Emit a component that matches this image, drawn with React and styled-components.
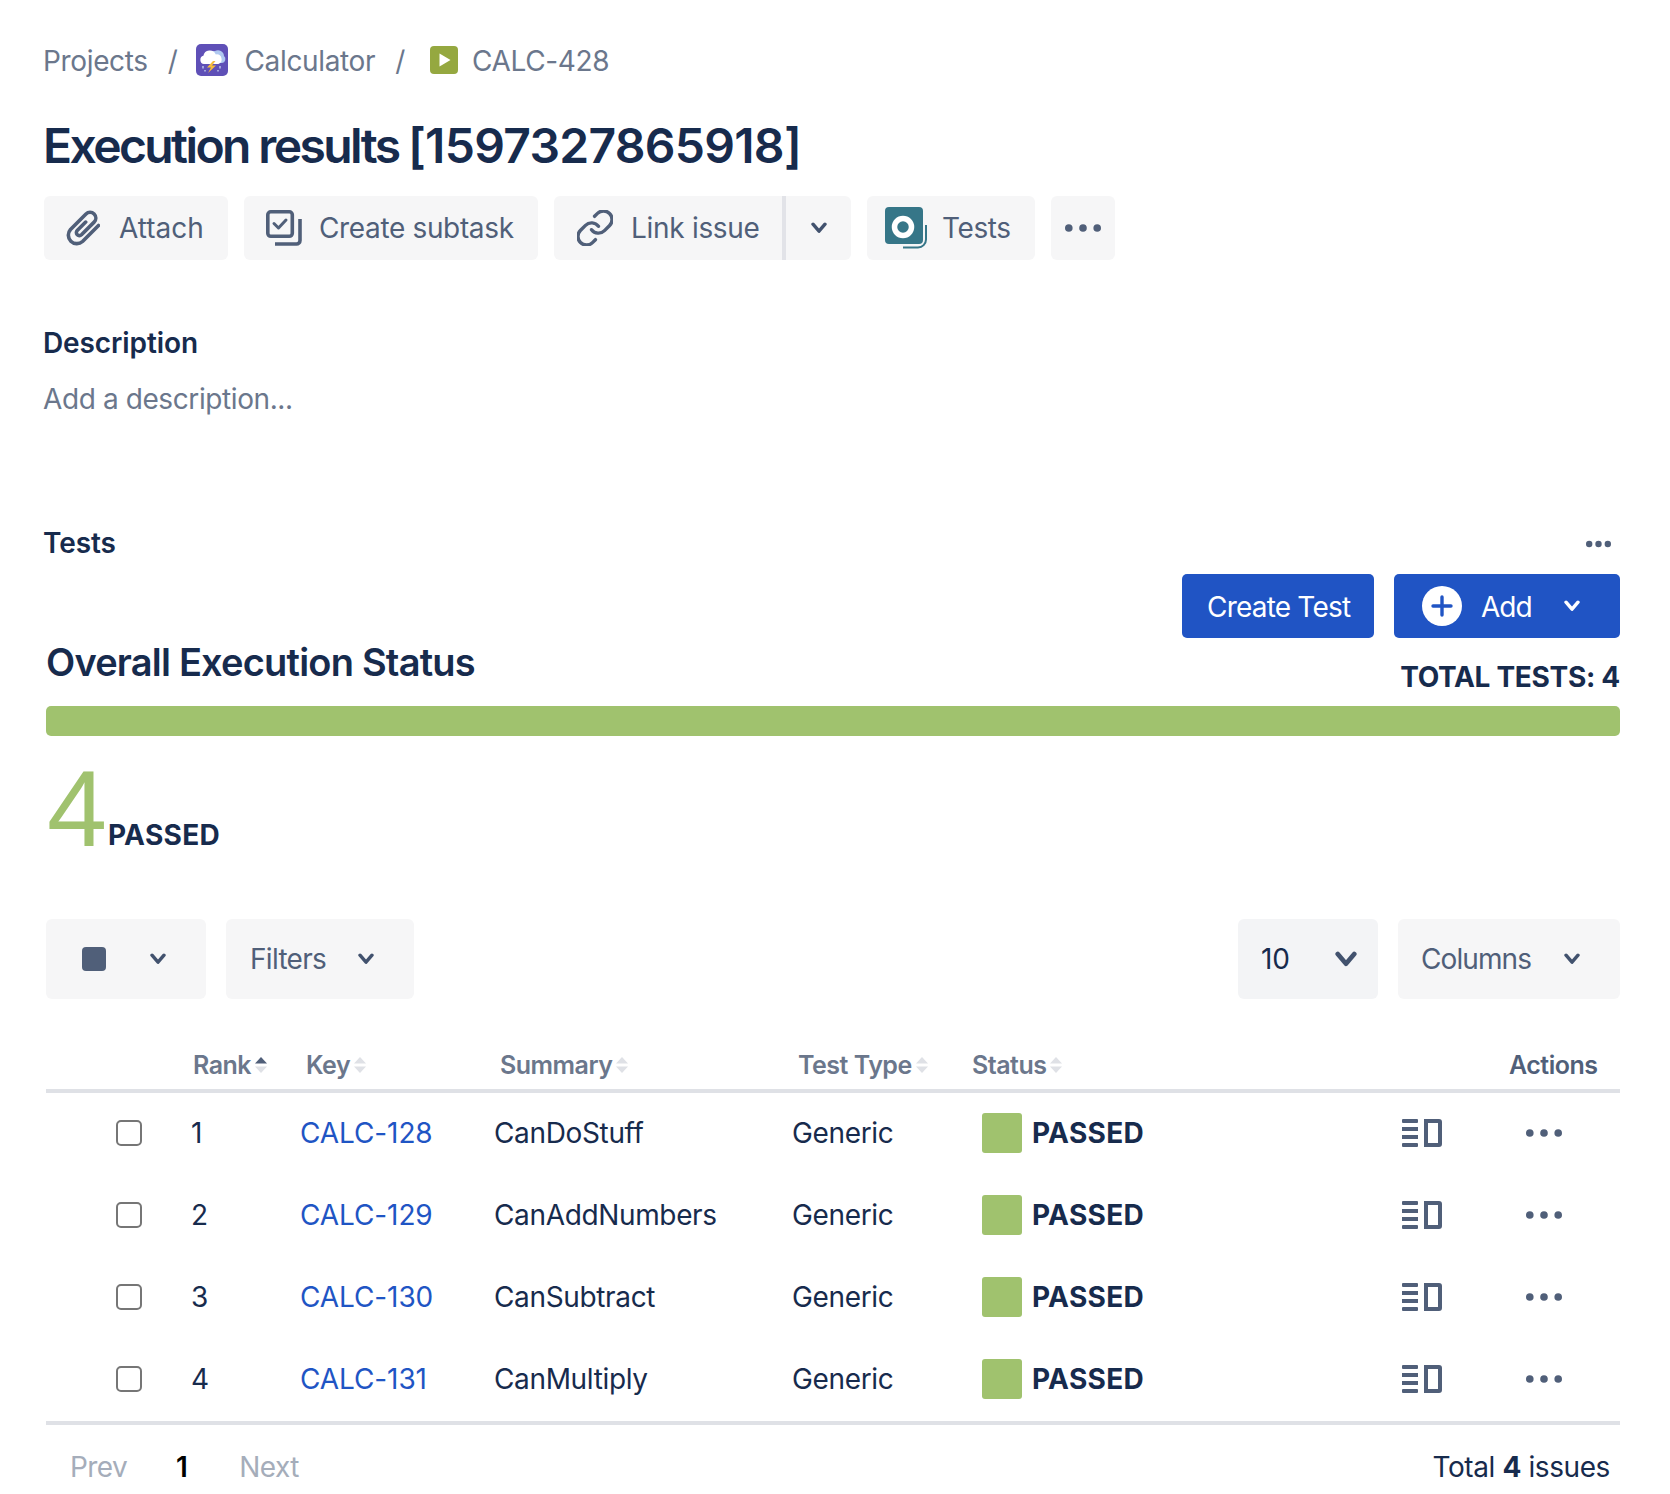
import React from "react";
import styled, { createGlobalStyle } from "styled-components";

const Global = createGlobalStyle`
  html, body { margin: 0; padding: 0; background: #fff; }
  body { font-family: Inter, "Liberation Sans", sans-serif; color: #172B4D; -webkit-font-smoothing: antialiased; }
  * { box-sizing: border-box; }
`;

const Page = styled.div`
  width: 1670px;
  height: 1494px;
  padding: 44px 50px 0 43px;
  overflow: hidden;
`;
const Crumbs = styled.nav`
  display: flex;
  align-items: center;
  height: 32px;
  font-size: 28px;
  letter-spacing: -0.35px;
  color: #6B778C;
  margin-bottom: 39px;
`;
const CrumbLabel = styled.span`
  margin-left: ${p => p.$gap || 0}px;
  padding-top: 2px;
`;
const Slash = styled.span`
  margin: 0 ${p => p.$after}px 0 20px;
  padding-top: 2px;
`;
const Title = styled.h1`
  margin: 0;
  height: 62px;
  line-height: 62px;
  font-size: 48px;
  font-weight: 600;
  letter-spacing: -2.6px;
  color: #172B4D;
`;
const TitleNumber = styled.span`
  letter-spacing: -0.7px;
`;
const Toolbar = styled.div`
  display: flex;
  gap: 16px;
  margin: 19px 0 0 1px;
`;
const ToolButton = styled.div`
  display: flex;
  align-items: center;
  height: 64px;
  width: ${p => p.$w}px;
  padding-left: ${p => p.$pl ?? 22}px;
  gap: ${p => p.$gap ?? 12}px;
  background: #F6F6F7;
  border-radius: 6px;
  color: #505F79;
  font-size: 28px;
  letter-spacing: ${p => p.$ls ?? -0.35}px;
  justify-content: ${p => p.$center ? "center" : "flex-start"};
`;
const SplitButton = styled.div`
  display: flex;
  height: 64px;
  width: 297px;
  background: #F6F6F7;
  border-radius: 6px;
  color: #505F79;
  font-size: 28px;
  letter-spacing: -0.3px;
`;
const SplitMain = styled.div`
  display: flex;
  align-items: center;
  width: 232px;
  padding-left: 23px;
  gap: 18px;
  border-right: 4px solid #E2E3E8;
`;
const SplitArrow = styled.div`
  flex: 1;
  display: flex;
  align-items: center;
  justify-content: center;
`;
const Heading = styled.h2`
  margin: 0;
  font-size: 28px;
  line-height: 36px;
  font-weight: 600;
  letter-spacing: -0.1px;
  color: #172B4D;
`;
const DescHeading = styled(Heading)`
  margin-top: 65px;
`;
const Placeholder = styled.div`
  margin-top: 20px;
  font-size: 28px;
  line-height: 36px;
  letter-spacing: -0.4px;
  color: #6B778C;
`;
const TestsHead = styled.div`
  display: flex;
  justify-content: space-between;
  align-items: center;
  margin-top: 108px;
  height: 36px;
  padding: 0 9px 0 0;
`;
const TestsMenu = styled.span`
  display: flex;
  padding-top: 2px;
`;
const Section = styled.div`
  margin-left: 3px;
`;
const StatusHead = styled.div`
  display: flex;
  justify-content: space-between;
  margin-top: 13px;
  height: 132px;
`;
const StatusTitle = styled.h3`
  margin: 64px 0 0;
  font-size: 38px;
  line-height: 48px;
  font-weight: 600;
  letter-spacing: -0.8px;
  color: #172B4D;
`;
const HeadRight = styled.div`
  display: flex;
  flex-direction: column;
  align-items: flex-end;
`;
const PrimaryRow = styled.div`
  display: flex;
  gap: 20px;
`;
const PrimaryButton = styled.div`
  display: flex;
  align-items: center;
  height: 64px;
  width: ${p => p.$w}px;
  padding-left: ${p => p.$pl}px;
  background: #2054C4;
  border-radius: 5px;
  color: #fff;
  font-size: 28px;
  letter-spacing: ${p => p.$ls}px;
`;
const ButtonLabel = styled.span`
  padding-top: 2px;
`;
const AddLabel = styled(ButtonLabel)`
  margin: 0 32px 0 19px;
`;
const Total = styled.div`
  margin-top: 21px;
  font-size: 28px;
  line-height: 36px;
  font-weight: 700;
  letter-spacing: -0.3px;
  color: #172B4D;
`;
const Bar = styled.div`
  height: 30px;
  background: #A0C26E;
  border-radius: 5px;
`;
const Count = styled.div`
  display: flex;
  align-items: flex-end;
  margin-top: 37px;
  height: 71px;
`;
const Big = styled.span`
  font-family: "Liberation Sans", Arial, sans-serif;
  font-size: 108px;
  line-height: 71px;
  height: 71px;
  color: #A0C26E;
  margin-left: 1px;
  width: 61px;
`;
const CountLabel = styled.span`
  font-size: 28px;
  font-weight: 700;
  line-height: 18px;
  letter-spacing: 0.3px;
  color: #172B4D;
`;
const Controls = styled.div`
  display: flex;
  justify-content: space-between;
  margin-top: 75px;
`;
const ControlGroup = styled.div`
  display: flex;
  gap: 20px;
`;
const Control = styled.div`
  display: flex;
  align-items: center;
  justify-content: space-between;
  height: 80px;
  width: ${p => p.$w}px;
  padding: 0 ${p => p.$pr}px 0 ${p => p.$pl}px;
  background: ${p => p.$bg || "#F6F6F7"};
  border-radius: 6px;
  font-size: 28px;
  letter-spacing: ${p => p.$ls ?? -0.7}px;
  color: ${p => p.$dark ? "#172B4D" : "#505F79"};
`;
const Swatch = styled.span`
  display: block;
  width: 24px;
  height: 24px;
  border-radius: 4px;
  background: #505F79;
`;
const TableHead = styled.div`
  display: grid;
  grid-template-columns: 147px 113px 194px 298px 174px 537px auto;
  align-items: center;
  margin-top: 44px;
  height: 50px;
  border-bottom: 4px solid #DFE1E6;
  padding-bottom: 3px;
  font-size: 25px;
  font-weight: 600;
  letter-spacing: -0.5px;
  color: #6B778C;
`;
const HeadCell = styled.div`
  display: flex;
  align-items: center;
  gap: 4px;
  color: ${p => p.$dark ? "#505F79" : "#6B778C"};
`;
const Row = styled.div`
  display: grid;
  grid-template-columns: 145px 109px 194px 298px 190px 420px 124px auto;
  align-items: center;
  height: 82px;
  padding-bottom: 2px;
  font-size: 28px;
  color: #172B4D;
`;
const Rows = styled.div`
  border-bottom: 4px solid #DFE1E6;
`;
const CheckCell = styled.div`
  padding-left: 70px;
  display: flex;
`;
const Check = styled.span`
  display: block;
  width: 26px;
  height: 26px;
  border: 2px solid #767676;
  border-radius: 5px;
  background: #fff;
`;
const KeyLink = styled.a`
  color: #1F55C4;
  letter-spacing: -0.1px;
  text-decoration: none;
`;
const TextCell = styled.div`
  letter-spacing: -0.35px;
`;
const StatusCell = styled.div`
  display: flex;
  align-items: center;
  gap: 10px;
  font-weight: 700;
  letter-spacing: 0.3px;
`;
const StatusSwatch = styled.span`
  display: block;
  width: 40px;
  height: 40px;
  border-radius: 3px;
  background: #A0C26E;
`;
const IconCell = styled.div`
  display: flex;
  align-items: center;
`;
const Footer = styled.div`
  display: flex;
  justify-content: space-between;
  align-items: center;
  margin-top: 24px;
  height: 36px;
  font-size: 28px;
`;
const Pager = styled.div`
  display: flex;
  padding-left: 24px;
  letter-spacing: -0.6px;
  color: #A5ADBA;
`;
const PageNum = styled.span`
  color: #000;
  font-weight: 600;
  margin: 0 52px 0 49px;
`;
const TotalIssues = styled.div`
  padding-right: 10px;
  letter-spacing: -0.4px;
  color: #172B4D;
`;
const Strong = styled.b`
  font-weight: 700;
`;

const Chevron = ({ size = 16, color = "#42526E", sw = 3.4 }) => (
  <svg width={size} height={size * 0.72} viewBox="0 0 16 11.5" fill="none" stroke={color} strokeWidth={sw} strokeLinecap="round" strokeLinejoin="round">
    <path d="M2 2.2l6 7 6-7" />
  </svg>
);
const Dots = ({ color = "#505F79", w = 36, r = 3.8 }) => (
  <svg width={w} height="10" viewBox={`0 0 ${w} 10`} fill={color}>
    <circle cx={r} cy="5" r={r} />
    <circle cx={w / 2} cy="5" r={r} />
    <circle cx={w - r} cy="5" r={r} />
  </svg>
);
const CalcIcon = () => (
  <svg width="32" height="32" viewBox="0 0 32 32">
    <rect width="32" height="32" rx="5" fill="#5F50B7" />
    <path d="M14 17a6 6 0 0 1 5-10 6 6 0 0 1 9 5 4 4 0 0 1-2 7h-9z" fill="#AFC8F0" />
    <path d="M8 20a4.2 4.2 0 0 1-.6-8.2 6.5 6.5 0 0 1 12.4-1.4 5 5 0 0 1 2.6 9.6z" fill="#fff" />
    <path d="M17 17l-6 6.500h4l-3 5.500 8-7.500h-4l3.500-4.500z" fill="#F6BC3C" />
    <path d="M7 22v2.500M24 22v2.500M9 26v1.500M22 26v1.500" stroke="#C9D6F0" strokeWidth="1.300" />
  </svg>
);
const PlayIcon = () => (
  <svg width="28" height="28" viewBox="0 0 28 28">
    <rect width="28" height="28" rx="4" fill="#95A840" />
    <path d="M9.500 7.500l11 6.500-11 6.500z" fill="#fff" />
  </svg>
);
const ClipIcon = () => (
  <svg width="34" height="36" viewBox="0 0 34 36" fill="none" stroke="#505F79" strokeWidth="3.600" strokeLinecap="round" strokeLinejoin="round">
    <path d="M32.500 15.500L16.500 31.500A8.500 8.500 0 0 1 4.500 19.500L19.980 3.980A5.750 5.750 0 0 1 28.120 12.120L15.450 24.790A3 3 0 0 1 11.210 20.550L19.700 12.060" />
  </svg>
);
const SubtaskIcon = () => (
  <svg width="36" height="36" viewBox="0 0 36 36" fill="none" stroke="#505F79" strokeWidth="3.600">
    <rect x="1.800" y="1.800" width="24.500" height="24.500" rx="3" />
    <path d="M8 13.500l4.500 4.500 7.500-8" strokeWidth="3" strokeLinecap="round" strokeLinejoin="round" />
    <path d="M34 9v21.500a3.500 3.500 0 0 1-3.500 3.500H9" strokeWidth="3.600" />
  </svg>
);
const LinkIcon = () => (
  <svg width="36" height="36" viewBox="1.500 1.500 21 21" fill="none" stroke="#505F79" strokeWidth="2" strokeLinecap="round" strokeLinejoin="round">
    <path d="M10 13a5 5 0 0 0 7.540.54l3-3a5 5 0 0 0-7.070-7.070l-1.720 1.710" />
    <path d="M14 11a5 5 0 0 0-7.540-.54l-3 3a5 5 0 0 0 7.070 7.070l1.710-1.710" />
  </svg>
);
const TestsIcon = () => (
  <svg width="43" height="42" viewBox="0 0 43 42" fill="none">
    <rect x="0" y="0" width="38" height="37" rx="4" fill="#367688" />
    <circle cx="18" cy="20" r="8.500" stroke="#fff" strokeWidth="5.500" />
    <path d="M18 40.500h15a8 8 0 0 0 8-8V18" stroke="#367688" strokeWidth="2" />
  </svg>
);
const PlusBadge = () => (
  <svg width="40" height="40" viewBox="0 0 40 40">
    <circle cx="20" cy="20" r="20" fill="#fff" />
    <path d="M20 11v18M11 20h18" stroke="#2054C4" strokeWidth="3.400" strokeLinecap="round" />
  </svg>
);
const Sort = ({ active }) => (
  <svg width="12" height="16" viewBox="0 0 12 16">
    <path d="M6 0l6 6.500H0z" fill={active ? "#505F79" : "#DFE1E6"} />
    <path d="M6 16L0 9.500h12z" fill="#DFE1E6" />
  </svg>
);
const DetailIcon = () => (
  <svg width="40" height="28" viewBox="0 0 40 28" fill="#505F79">
    <rect x="0" y="0" width="16" height="4" rx="1" />
    <rect x="0" y="8" width="16" height="4" />
    <rect x="0" y="16" width="16" height="4" />
    <rect x="0" y="24" width="16" height="4" rx="1" />
    <path fillRule="evenodd" d="M22 0h15a3 3 0 0 1 3 3v22a3 3 0 0 1-3 3H22zM26 4v20h10V4z" />
  </svg>
);

const rows = [
  ["1", "CALC-128", "CanDoStuff"],
  ["2", "CALC-129", "CanAddNumbers"],
  ["3", "CALC-130", "CanSubtract"],
  ["4", "CALC-131", "CanMultiply"],
];

export default function App() {
  return (
    <Page>
      <Global />
      <Crumbs>
        <CrumbLabel>Projects</CrumbLabel>
        <Slash $after={19}>/</Slash>
        <CalcIcon />
        <CrumbLabel $gap={16}>Calculator</CrumbLabel>
        <Slash $after={25}>/</Slash>
        <PlayIcon />
        <CrumbLabel $gap={14}>CALC-428</CrumbLabel>
      </Crumbs>
      <Title>Execution results <TitleNumber>[1597327865918]</TitleNumber></Title>
      <Toolbar>
        <ToolButton $w={184} $gap={19} $pl={22} $ls={0}><ClipIcon /><span>Attach</span></ToolButton>
        <ToolButton $w={294} $gap={17} $pl={22}><SubtaskIcon /><span>Create subtask</span></ToolButton>
        <SplitButton>
          <SplitMain><LinkIcon /><span>Link issue</span></SplitMain>
          <SplitArrow><Chevron /></SplitArrow>
        </SplitButton>
        <ToolButton $w={168} $gap={14} $pl={18} $ls={-0.4}><TestsIcon /><span>Tests</span></ToolButton>
        <ToolButton $w={64} $pl={0} $center><Dots /></ToolButton>
      </Toolbar>
      <DescHeading>Description</DescHeading>
      <Placeholder>Add a description...</Placeholder>
      <TestsHead>
        <Heading>Tests</Heading>
        <TestsMenu><Dots w={25} r={3.2} /></TestsMenu>
      </TestsHead>
      <Section>
        <StatusHead>
          <StatusTitle>Overall Execution Status</StatusTitle>
          <HeadRight>
            <PrimaryRow>
              <PrimaryButton $w={192} $pl={25} $ls={-0.8}><ButtonLabel>Create Test</ButtonLabel></PrimaryButton>
              <PrimaryButton $w={226} $pl={28} $ls={-1}>
                <PlusBadge />
                <AddLabel>Add</AddLabel>
                <Chevron color="#fff" />
              </PrimaryButton>
            </PrimaryRow>
            <Total>TOTAL TESTS: 4</Total>
          </HeadRight>
        </StatusHead>
        <Bar />
        <Count>
          <Big>4</Big>
          <CountLabel>PASSED</CountLabel>
        </Count>
        <Controls>
          <ControlGroup>
            <Control $w={160} $pl={36} $pr={40}><Swatch /><Chevron /></Control>
            <Control $w={188} $pl={24} $pr={40}><span>Filters</span><Chevron /></Control>
          </ControlGroup>
          <ControlGroup>
            <Control $w={140} $pl={23} $pr={21} $bg="#F3F4F6" $dark $ls={-0.2}><span>10</span><Chevron size={22} /></Control>
            <Control $w={222} $pl={23} $pr={40} $ls={-0.9}><span>Columns</span><Chevron /></Control>
          </ControlGroup>
        </Controls>
        <TableHead>
          <div />
          <HeadCell>Rank<Sort active /></HeadCell>
          <HeadCell>Key<Sort /></HeadCell>
          <HeadCell>Summary<Sort /></HeadCell>
          <HeadCell>Test Type<Sort /></HeadCell>
          <HeadCell>Status<Sort /></HeadCell>
          <HeadCell $dark>Actions</HeadCell>
        </TableHead>
        <Rows>
          {rows.map(([rank, key, summary]) => (
            <Row key={key}>
              <CheckCell><Check /></CheckCell>
              <div>{rank}</div>
              <KeyLink href="#">{key}</KeyLink>
              <TextCell>{summary}</TextCell>
              <TextCell>Generic</TextCell>
              <StatusCell><StatusSwatch />PASSED</StatusCell>
              <IconCell><DetailIcon /></IconCell>
              <IconCell><Dots /></IconCell>
            </Row>
          ))}
        </Rows>
        <Footer>
          <Pager>
            <span>Prev</span>
            <PageNum>1</PageNum>
            <span>Next</span>
          </Pager>
          <TotalIssues>Total <Strong>4</Strong> issues</TotalIssues>
        </Footer>
      </Section>
    </Page>
  );
}
